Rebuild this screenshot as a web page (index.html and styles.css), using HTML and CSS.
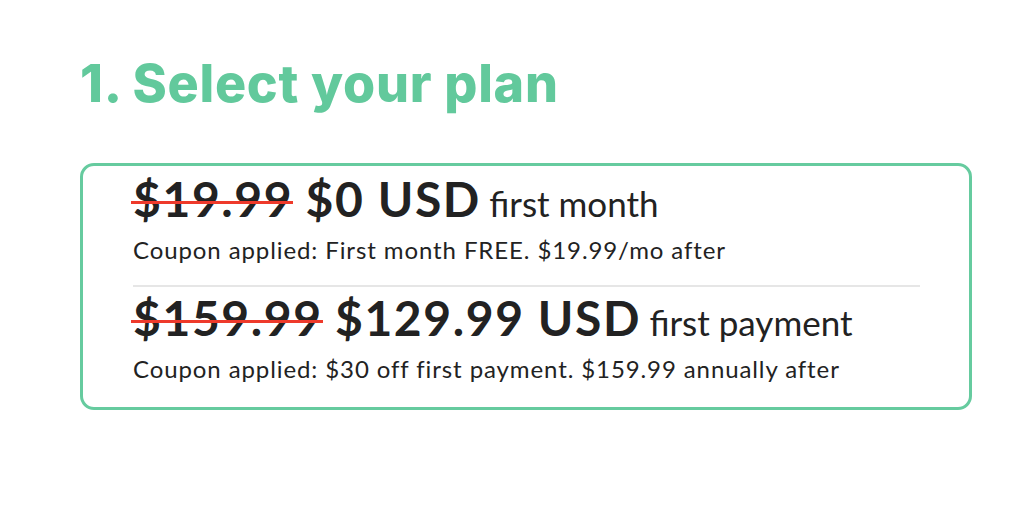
FILE: index.html
```html
<!DOCTYPE html>
<html>
<head>
<meta charset="utf-8">
<link rel="stylesheet" href="styles.css">
</head>
<body>
<main class="page">
  <h1 class="title">1. Select your plan</h1>
  <section class="plans">
    <div class="plan">
      <div class="price-line"><span class="old">$19.99</span> <span class="new">$0 USD</span> <span class="period">first month</span></div>
      <p class="note">Coupon applied: First month FREE. $19.99/mo after</p>
    </div>
    <div class="plan plan-second">
      <div class="price-line"><span class="old">$159.99</span> <span class="new">$129.99 USD</span> <span class="period">first payment</span></div>
      <p class="note">Coupon applied: $30 off first payment. $159.99 annually after</p>
    </div>
  </section>
</main>
</body>
</html>
```

FILE: styles.css
```css
* { box-sizing: border-box; }
html, body { margin: 0; padding: 0; background: #ffffff; }
body { font-family: "Lato", "Open Sans", sans-serif; color: #222222; }
.page { padding: 54px 0 0 80px; width: 1024px; }
.title {
  margin: 0;
  font-family: "Inter", "Lato", sans-serif;
  font-weight: 800;
  font-size: 52px;
  line-height: 60px;
  letter-spacing: 0.7px;
  color: #62c99c;
}
.plans {
  margin-top: 49px;
  width: 892px;
  border: 3px solid #66cb9f;
  border-radius: 14px;
  padding: 5px 49px 24px 50px;
}
.plan-second { border-top: 2px solid #e6e6e6; margin-top: 21px; padding-top: 3px; }
.price-line { font-size: 48px; line-height: 56px; white-space: nowrap; color: #222222; }
.old, .new { font-weight: 700; font-size: 48px; letter-spacing: 1.6px; }
.old { position: relative; }
.old::after {
  content: "";
  position: absolute;
  left: -2px;
  right: 0;
  top: 31px;
  height: 3px;
  background: #ee3a2b;
}
.period { font-size: 35px; font-weight: 400; margin-left: -4px; }
.note { margin: 5px 0 0; font-size: 24px; line-height: 28px; letter-spacing: 0.9px; color: #222222; }
```
